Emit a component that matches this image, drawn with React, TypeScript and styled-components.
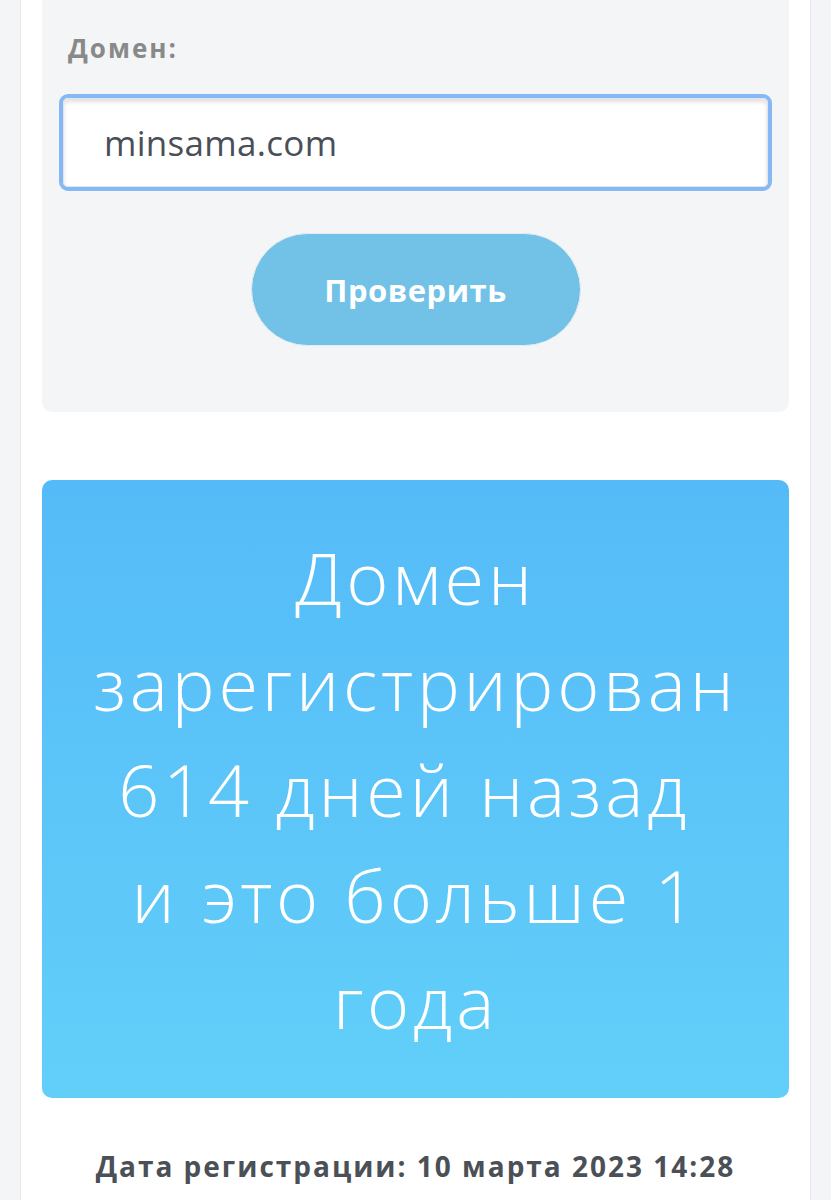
import React from "react";
import styled, { createGlobalStyle } from "styled-components";

const Global = createGlobalStyle`
  html, body { margin: 0; padding: 0; background: #f4f5f7; }
  body { font-family: "Open Sans", "Noto Sans", sans-serif; }
  * { box-sizing: border-box; }
`;

const Column = styled.div`
  margin: 0 20px;
  min-height: 1200px;
  background: #ffffff;
  border-left: 1px solid #e8e9ec;
  border-right: 1px solid #e8e9ec;
  padding: 0 21px;
  display: flex;
  flex-direction: column;
`;

const FormPanel = styled.section`
  background: #f4f5f7;
  border-radius: 0 0 10px 10px;
  padding: 31px 17px 66px;
  display: flex;
  flex-direction: column;
  align-items: stretch;
`;

const Label = styled.label`
  font-family: "Open Sans", sans-serif;
  font-weight: 700;
  font-size: 26px;
  line-height: 34px;
  letter-spacing: 2px;
  color: #898989;
  margin-left: 9px;
`;

const InputRing = styled.div`
  margin-top: 29px;
  border: 4px solid #86b8f6;
  border-radius: 9px;
  background: #ffffff;
  height: 97px;
  display: flex;
`;

const Input = styled.input`
  flex: 1;
  border: 1px solid #e2e4e7;
  border-radius: 5px;
  box-shadow: inset 0 3px 4px rgba(0, 0, 0, 0.12);
  background: #ffffff;
  padding: 0 40px;
  font-family: "Open Sans", sans-serif;
  font-size: 35px;
  letter-spacing: 0.3px;
  color: #4a4f57;
  outline: none;
`;

const ButtonRow = styled.div`
  margin-top: 42px;
  display: flex;
  justify-content: center;
`;

const CheckButton = styled.button`
  width: 330px;
  height: 113px;
  border-radius: 57px;
  border: 1px solid #e4ecf1;
  background: #72c1e7;
  color: #ffffff;
  font-family: "Open Sans", sans-serif;
  font-weight: 700;
  font-size: 31px;
  letter-spacing: 0.5px;
  cursor: pointer;
`;

const ResultCard = styled.section`
  margin-top: 68px;
  height: 618px;
  border-radius: 10px;
  background: linear-gradient(180deg, #55bbf8 0%, #62cff9 100%);
  display: flex;
  flex-direction: column;
  align-items: center;
  justify-content: center;
`;

const ResultLine = styled.div`
  font-family: "Open Sans", sans-serif;
  font-weight: 300;
  font-size: 72px;
  line-height: 106px;
  color: #ffffff;
  white-space: pre;
  letter-spacing: 3.8px;
`;

const DateLine = styled.p`
  margin: 48px 0 0;
  text-align: center;
  font-family: "Open Sans", sans-serif;
  font-weight: 700;
  font-size: 28px;
  line-height: 40px;
  letter-spacing: 2px;
  color: #4b4f56;
`;

const lines = ["Домен", "зарегистрирован", "614 дней назад ", "и это больше 1", "года"];

export default function App() {
  return (
    <>
      <Global />
      <Column>
        <FormPanel>
          <Label htmlFor="domain">Домен:</Label>
          <InputRing>
            <Input id="domain" defaultValue="minsama.com" />
          </InputRing>
          <ButtonRow>
            <CheckButton>Проверить</CheckButton>
          </ButtonRow>
        </FormPanel>
        <ResultCard>
          {lines.map((l) => (
            <ResultLine key={l}>{l}</ResultLine>
          ))}
        </ResultCard>
        <DateLine>Дата регистрации: 10 марта 2023 14:28</DateLine>
      </Column>
    </>
  );
}
